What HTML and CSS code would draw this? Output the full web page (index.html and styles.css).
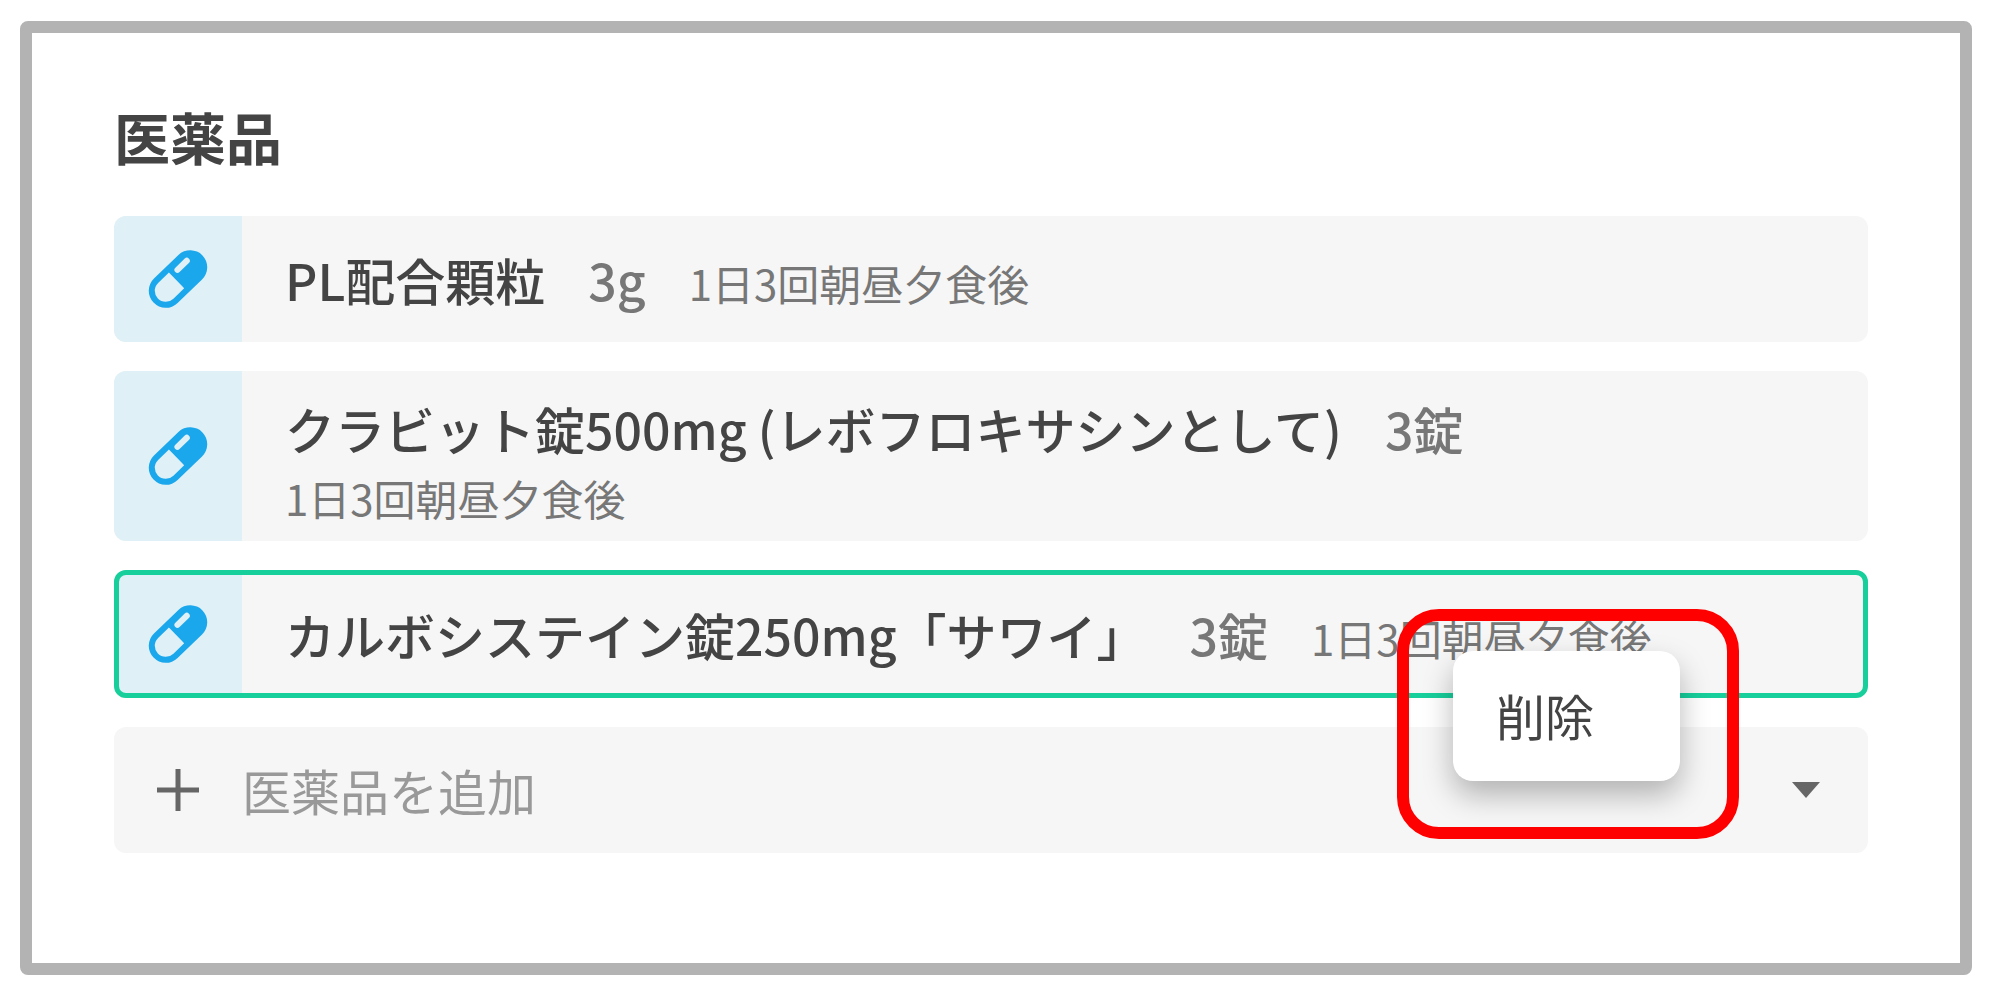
FILE: index.html
```html
<!doctype html>
<html lang="ja">
<head>
  <meta charset="utf-8">
  <title>医薬品</title>
  <link rel="stylesheet" href="styles.css">
</head>
<body>
  <svg width="0" height="0" class="defs">
    <symbol id="pill" viewBox="0 0 60 58">
      <g transform="translate(30 29) rotate(-44)">
        <path fill="#1aa7ec" fill-rule="evenodd" d="M-17 -17H17A17 17 0 0 1 17 17H-17A17 17 0 0 1 -17 -17ZM-17 -11A11 11 0 0 0 -17 11H-2V-11Z"/>
        <path stroke="#dff0f7" stroke-width="6" stroke-linecap="round" d="M6 -7H19"/>
      </g>
    </symbol>
  </svg>
  <main class="frame">
    <h1>医薬品</h1>
    <ul class="list">
      <li class="item">
        <div class="icon"><svg><use href="#pill"/></svg></div>
        <div class="text">
          <span class="name">PL配合顆粒</span>
          <span class="amount">3g</span>
          <span class="usage">1日3回朝昼夕食後</span>
        </div>
      </li>
      <li class="item">
        <div class="icon"><svg><use href="#pill"/></svg></div>
        <div class="text">
          <span class="name">クラビット錠500mg (レボフロキサシンとして)</span>
          <span class="amount">3錠</span>
          <span class="usage">1日3回朝昼夕食後</span>
        </div>
      </li>
      <li class="item selected">
        <div class="icon"><svg><use href="#pill"/></svg></div>
        <div class="text">
          <span class="name">カルボシステイン錠250mg「サワイ」</span>
          <span class="amount">3錠</span>
          <span class="usage">1日3回朝昼夕食後</span>
        </div>
        <!-- context menu with its highlight ring -->
        <div class="ring">
          <div class="menu"><button type="button">削除</button></div>
        </div>
      </li>
    </ul>
    <div class="add">
      <svg class="plus" viewBox="0 0 42 42"><path d="M21 0V42M0 21H42" stroke="#666" stroke-width="5"/></svg>
      <input type="text" aria-label="医薬品を追加" placeholder="医薬品を追加">
      <button type="button" aria-label="候補を開く">
        <svg viewBox="0 0 28 16"><path d="M0 0H28L14 16Z" fill="#666"/></svg>
      </button>
    </div>
  </main>
</body>
</html>
```

FILE: styles.css
```css
* {
  box-sizing: border-box;
}
body {
  display: flex;
  min-height: 100vh;
  margin: 0;
  padding: 21px 28px 24px 20px;
  background: #fff;
  color: #444;
  font-family: "Noto Sans CJK JP", sans-serif;
  font-size: 49px;
}
.defs {
  position: absolute;
}
.frame {
  flex: 1;
  min-width: 0;
  padding: 75px 92px 60px 82px;
  border: 12px solid #b3b3b3;
  border-radius: 8px;
}
h1 {
  margin: 0 0 52px;
  font-size: 56px;
  font-weight: 700;
  line-height: 56px;
}
.list {
  display: grid;
  gap: 29px;
  margin: 0 0 29px;
  padding: 0;
  list-style: none;
}
.item {
  position: relative;
  display: flex;
  min-height: 126px;
  border-radius: 12px;
  background: #f6f6f6;
}
.icon {
  display: flex;
  flex: none;
  align-items: center;
  justify-content: center;
  width: 128px;
  border-radius: 12px 0 0 12px;
  background: #dff0f7;
}
.icon svg {
  width: 60px;
  height: 58px;
}
.text {
  display: flex;
  flex: 1;
  flex-wrap: wrap;
  align-items: baseline;
  align-content: center;
  column-gap: 43px;
  padding: 15px 43px;
  line-height: 84px;
}
.name,
.amount {
  font-size: 50px;
  font-weight: 500;
}
.amount {
  color: #777;
}
.usage {
  color: #777;
  font-size: 42px;
  line-height: 56px;
}

/* the outline is laid over the row so the icon cell keeps its width */
.selected {
  min-height: 128px;
}
.selected::after {
  content: "";
  position: absolute;
  inset: 0;
  border: 5px solid #17cf9b;
  border-radius: 12px;
}
.ring {
  position: absolute;
  z-index: 1;
  top: 39px;
  right: 129px;
  padding: 30px 47px 46px 44px;
  border: 12px solid #f00;
  border-radius: 42px;
}
.menu {
  border-radius: 20px;
  background: #fff;
  box-shadow: 0 14px 30px rgba(0, 0, 0, 0.28);
}
.menu button {
  display: block;
  min-width: 227px;
  padding: 28px 43px 30px;
  border: 0;
  background: none;
  color: #444;
  font: inherit;
  line-height: 72px;
  text-align: left;
}

.add {
  display: flex;
  align-items: center;
  height: 126px;
  padding: 0 48px 0 43px;
  border-radius: 12px;
  background: #f6f6f6;
}
.plus {
  flex: none;
  width: 42px;
  height: 42px;
}
.add input {
  flex: 1;
  min-width: 0;
  margin: 0 0 0 43px;
  padding: 0 0 2px;
  border: 0;
  outline: 0;
  background: none;
  color: #444;
  font: inherit;
}
.add input::placeholder {
  color: #999;
  opacity: 1;
}
.add button {
  display: flex;
  padding: 0;
  border: 0;
  background: none;
}
.add button svg {
  width: 28px;
  height: 16px;
}
```
